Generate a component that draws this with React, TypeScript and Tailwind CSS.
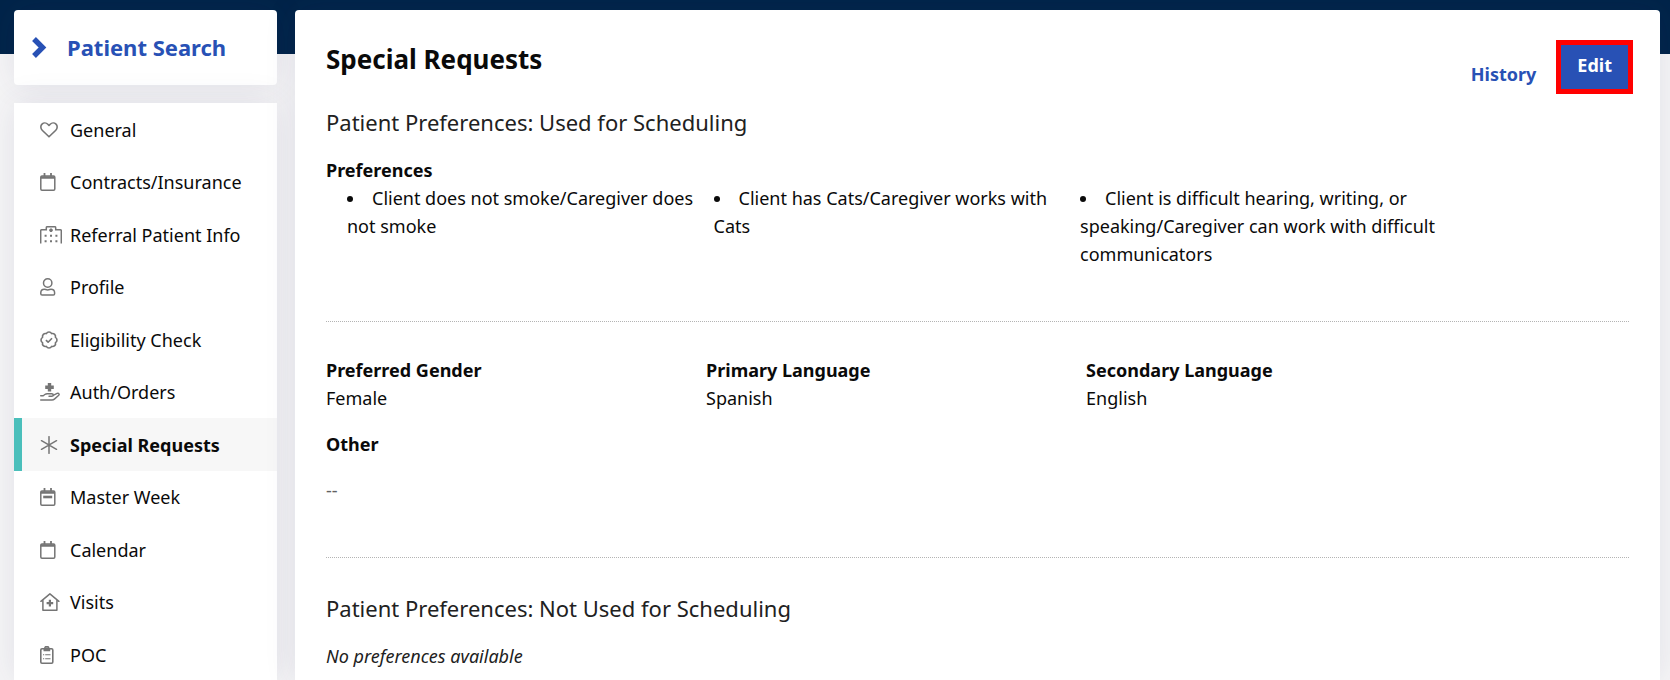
import type { ReactNode } from "react";

const HeartIcon = () => (
  <svg width="18" height="16" viewBox="0 0 18 16" fill="none" stroke="currentColor" strokeWidth="1.6" strokeLinejoin="round">
    <path d="M9 14.8 2.2 8.2C.4 6.400.4 3.700 2 2.100 3.700.5 6.200.6 7.800 2.200L9 3.500l1.200-1.300c1.600-1.600 4.100-1.700 5.800-.1 1.600 1.600 1.600 4.300-.2 6.100L9 14.800Z" />
  </svg>
);

const CalendarIcon = () => (
  <svg width="16" height="18" viewBox="0 0 16 18" fill="none" stroke="currentColor" strokeWidth="1.5">
    <rect x="0.8" y="3" width="14" height="14.2" rx="1.2" />
    <path d="M.8 4.5h14" strokeWidth="2.5" />
    <path d="M4.5 0v3.5M11 0v3.5" strokeWidth="1.8" />
  </svg>
);

const WeekIcon = () => (
  <svg width="16" height="18" viewBox="0 0 16 18" fill="none" stroke="currentColor" strokeWidth="1.5">
    <rect x="0.8" y="3" width="14" height="14.2" rx="1.2" />
    <path d="M.8 4.5h14" strokeWidth="2.5" />
    <path d="M4.5 0v3.5M11 0v3.5" strokeWidth="1.8" />
    <path d="M3.2 9h9" strokeWidth="2.6" />
  </svg>
);

const HospitalIcon = () => (
  <svg width="22" height="18" viewBox="0 0 22 18" fill="none" stroke="currentColor" strokeWidth="1.5">
    <path d="M.7 17.6V4.8c0-.6.4-1 1-1h4.600V1.700c0-.6.4-1 1-1h7.400c.6 0 1 .4 1 1v2.100h4.600c.6 0 1 .4 1 1v12.800" />
    <path d="M9.200 4.200h3.600M11 2.400V6M4.600 9.700h2M10 9.700h2M15.400 9.700h2M4.600 15.200h2M10 15.200h2M15.400 15.200h2" strokeWidth="1.9" />
  </svg>
);

const UserIcon = () => (
  <svg width="16" height="18" viewBox="0 0 16 18" fill="none" stroke="currentColor" strokeWidth="1.5">
    <circle cx="7.7" cy="5" r="4.2" />
    <path d="M.8 15.800v-1c0-2.100 1.600-3.500 3.600-3.500 1.100 0 1.600.6 3.300.6s2.200-.6 3.300-.6c2 0 3.600 1.400 3.600 3.500v1c0 .8-.6 1.300-1.300 1.300H2.100c-.7 0-1.300-.5-1.300-1.300Z" />
  </svg>
);

const BadgeCheckIcon = () => (
  <svg width="18" height="18" viewBox="0 0 18 18" fill="none" stroke="currentColor" strokeWidth="1.6" strokeLinejoin="round">
    <path d="M15.4 6.350a3 3 0 0 1 0 5.300 3 3 0 0 1-3.750 3.750 3 3 0 0 1-5.300 0 3 3 0 0 1-3.750-3.750 3 3 0 0 1 0-5.300 3 3 0 0 1 3.750-3.750 3 3 0 0 1 5.300 0 3 3 0 0 1 3.750 3.750Z" />
    <path d="m5.900 9.100 2.200 2.100 3.900-4" />
  </svg>
);

const HandMedicalIcon = () => (
  <svg width="20" height="18" viewBox="0 0 20 18" fill="none" stroke="currentColor" strokeWidth="1.4" strokeLinecap="round" strokeLinejoin="round">
    <path d="M9.500 0v8.600M5.200 4.300h8.600" strokeWidth="3.4" strokeLinecap="butt" />
    <path d="M.7 12.700h2.600l1.500-1.200c.7-.5 1.500-.8 2.400-.8h4.600c.9 0 1.500.5 1.500 1.200 0 .8-.6 1.300-1.500 1.300H9" />
    <path d="m13.200 12.300 3.900-1.900c1.600-.7 2.800 1 1.400 2.100l-4.100 3.600c-.7.6-1.500.9-2.400.9H.7" />
  </svg>
);

const AsteriskIcon = () => (
  <svg width="18" height="18" viewBox="0 0 18 18" fill="none" stroke="currentColor" strokeWidth="1.5" strokeLinecap="round">
    <path d="M9 .7v16.600M1.500 4.700l15 8.600M16.500 4.700l-15 8.600" />
  </svg>
);

const HouseMedicalIcon = () => (
  <svg width="20" height="18" viewBox="0 0 20 18" fill="none" stroke="currentColor" strokeWidth="1.5" strokeLinejoin="round" strokeLinecap="round">
    <path d="M.9 8.300 9.900.9l9 7.400M2.900 7v10.200h14V7" />
    <path d="M9.900 6.800v6.600M6.600 10.100h6.600" strokeWidth="2.2" strokeLinecap="butt" />
  </svg>
);

const ClipboardIcon = () => (
  <svg width="14" height="18" viewBox="0 0 14 18" fill="none" stroke="currentColor" strokeWidth="1.6">
    <rect x="0.8" y="2.8" width="12" height="14.4" rx="1.2" />
    <path d="M3.500 2.500h1.700a1.700 1.700 0 0 1 3.300 0h1.700v2.800H3.500Z" fill="currentColor" stroke="none" />
    <path d="M4.800 2.500a2 2 0 0 1 4 0" />
    <path d="M3 8.800h1.200M5.200 8.800h5.300M3 12.700h1.200M5.200 12.700h5.300" strokeWidth="1.1" />
  </svg>
);

const menu: { label: string; icon: ReactNode }[] = [
  { label: "General", icon: <HeartIcon /> },
  { label: "Contracts/Insurance", icon: <CalendarIcon /> },
  { label: "Referral Patient Info", icon: <HospitalIcon /> },
  { label: "Profile", icon: <UserIcon /> },
  { label: "Eligibility Check", icon: <BadgeCheckIcon /> },
  { label: "Auth/Orders", icon: <HandMedicalIcon /> },
  { label: "Special Requests", icon: <AsteriskIcon /> },
  { label: "Master Week", icon: <WeekIcon /> },
  { label: "Calendar", icon: <CalendarIcon /> },
  { label: "Visits", icon: <HouseMedicalIcon /> },
  { label: "POC", icon: <ClipboardIcon /> },
];

const preferences = [
  "Client does not smoke/Caregiver does not smoke",
  "Client has Cats/Caregiver works with Cats",
  "Client is difficult hearing, writing, or speaking/Caregiver can work with difficult communicators",
];

const fields = [
  { label: "Preferred Gender", value: "Female" },
  { label: "Primary Language", value: "Spanish" },
  { label: "Secondary Language", value: "English" },
];

const Sidebar = ({ active }: { active: string }) => (
  <aside className="w-[263px] shrink-0 flex flex-col gap-[18px]">
    <a
      href="#search"
      className="flex items-center gap-5 h-[75px] pl-[18px] pb-px rounded-[4px] bg-white text-[#2851b5] text-[22px] font-bold shadow-[0_0_32px_rgba(60,50,110,0.1)]"
    >
      <svg width="15" height="22" viewBox="0 0 15 22" fill="none" stroke="currentColor" strokeWidth="5.4">
        <path d="m2 3 8.500 8.500L2 20" />
      </svg>
      Patient Search
    </a>
    <nav className="grow bg-white shadow-[0_0_32px_rgba(60,50,110,0.1)]">
      {menu.map((item) => (
        <a
          key={item.label}
          href="#"
          className={
            item.label === active
              ? "flex items-center h-[52px] odd:h-[53px] pl-[18px] border-l-8 border-[#4abfbb] bg-[#f7f7f7] font-bold"
              : "flex items-center h-[52px] odd:h-[53px] pl-[26px]"
          }
        >
          <span className="w-[30px] shrink-0 text-[#757575]">{item.icon}</span>
          {item.label}
        </a>
      ))}
    </nav>
  </aside>
);

const Divider = () => <hr className="mt-[53px] mb-[34px] border-t border-dotted border-[#b4b4b4]" />;

const App = () => {
  return (
    <div className="min-h-screen flex flex-col bg-[#f5f5f6] bg-linear-[#002449,#002449] bg-[length:100%_54px] bg-no-repeat font-['Noto_Sans',sans-serif] text-[18px] leading-[28px] text-[#0a0a0a]">
      <div className="grow flex gap-[18px] pt-[10px] pl-[14px] pr-[10px]">
        <Sidebar active="Special Requests" />
        <main className="grow min-w-0 rounded-t-[4px] bg-white px-[31px] pt-[30px] shadow-[0_0_32px_rgba(60,50,110,0.1)]">
          <header className="flex items-start justify-between">
            <h1 className="text-[26px] leading-[38px] font-bold">Special Requests</h1>
            <div className="flex items-end gap-5 -mr-1">
              <a href="#history" className="pb-[6px] font-bold text-[#2851b5]">
                History
              </a>
              <button className="h-[54px] px-4 pb-[5px] border-5 border-[#ff0000] bg-[#2851b5] text-white font-bold">
                Edit
              </button>
            </div>
          </header>

          <section>
            <h2 className="mt-3 text-[22px] leading-[32px] text-[#212121]">
              Patient Preferences: Used for Scheduling
            </h2>
            <h3 className="mt-[18px] font-bold">Preferences</h3>
            <ul className="w-[86%] pl-[21px] grid grid-cols-3 list-disc list-inside">
              {preferences.map((item) => (
                <li key={item}>{item}</li>
              ))}
            </ul>
          </section>

          <Divider />

          <section>
            <dl className="w-7/8 grid grid-cols-3">
              {fields.map((field) => (
                <div key={field.label}>
                  <dt className="font-bold">{field.label}</dt>
                  <dd>{field.value}</dd>
                </div>
              ))}
            </dl>
            <h3 className="mt-[18px] font-bold">Other</h3>
            <p className="mt-[18px] text-[#616161]">--</p>
          </section>

          <Divider />

          <section>
            <h2 className="text-[22px] leading-[32px] text-[#212121]">
              Patient Preferences: Not Used for Scheduling
            </h2>
            <p className="mt-[18px] italic text-[#212121]">No preferences available</p>
          </section>
        </main>
      </div>
    </div>
  );
};

export default App;
